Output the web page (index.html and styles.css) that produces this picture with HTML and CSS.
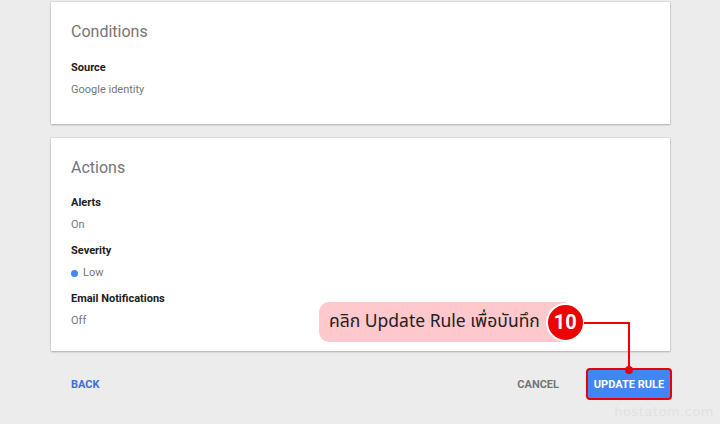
FILE: index.html
```html
<!DOCTYPE html>
<html lang="en">
<head>
    <meta charset="utf-8" />
    <title>Update Rule</title>
	<link rel="stylesheet" href="styles.css">
</head>
<body>
	<div class="page">
		<div class="card card-conditions">
			<div class="card-title">Conditions</div>
			<div class="field">
				<div class="label">Source</div>
				<div class="value">Google identity</div>
			</div>
		</div>

		<div class="card card-actions">
			<div class="card-title">Actions</div>
			<div class="field">
				<div class="label">Alerts</div>
				<div class="value">On</div>
			</div>
			<div class="field">
				<div class="label">Severity</div>
				<div class="value"><span class="dot"></span>Low</div>
			</div>
			<div class="field">
				<div class="label">Email Notifications</div>
				<div class="value">Off</div>
			</div>
		</div>

		<div class="footer">
			<a class="btn-back" href="#">BACK</a>
			<div class="footer-right">
				<a class="btn-cancel" href="#">CANCEL</a>
				<button class="btn-update" type="button">UPDATE RULE</button>
			</div>
		</div>
	</div>

	<div class="callout">
		<div class="callout-text">คลิก Update Rule เพื่อบันทึก</div>
		<div class="callout-num">10</div>
	</div>
	<div class="callout-line-h"></div>
	<div class="callout-line-v"></div>
	<div class="callout-dot"></div>

	<div class="watermark">hostatom.com</div>
</body>
</html>
```

FILE: styles.css
```css
body {
  margin: 0;
  background-color: #ececec;
  font-family: Roboto, "Liberation Sans", sans-serif;
  position: relative;
  width: 720px;
  height: 424px;
  overflow: hidden;
}

.page {
  width: 619px;
  margin: 0 auto;
  padding-top: 2px;
  position: relative;
  left: 0.5px;
}

.card {
  background: #fff;
  box-shadow: 0 1px 2px rgba(0, 0, 0, 0.22), 0 0 0 1px rgba(0, 0, 0, 0.05);
  padding: 20px 20px 22px 20px;
}

.card-conditions {
  height: 80px;
}

.card-conditions .card-title {
  margin-bottom: 18px;
}

.card-actions {
  margin-top: 14px;
}

.card-title {
  font-size: 16px;
  line-height: 20px;
  color: #757575;
  margin-bottom: 17px;
}

.field + .field {
  margin-top: 10px;
}

.label {
  font-size: 11px;
  line-height: 16px;
  font-weight: bold;
  color: #212121;
}

.value {
  font-size: 11px;
  line-height: 16px;
  color: #777;
  margin-top: 6px;
  display: flex;
  align-items: center;
}

.dot {
  width: 7px;
  height: 7px;
  border-radius: 50%;
  background: #4285f4;
  margin-right: 5px;
}

.footer {
  display: flex;
  justify-content: space-between;
  align-items: center;
  margin-top: 17px;
  padding-left: 20px;
}

.footer a {
  text-decoration: none;
  font-size: 11px;
  font-weight: bold;
}

.btn-back {
  color: #3f6cd6;
}

.footer-right {
  display: flex;
  align-items: center;
}

.btn-cancel {
  color: #757575;
  margin-right: 27px;
}

.btn-update {
  font-family: Roboto, "Liberation Sans", sans-serif;
  font-size: 11px;
  font-weight: bold;
  color: #fff;
  background: #4285f4;
  border: 2px solid #e8000b;
  border-radius: 4px;
  width: 86px;
  height: 32px;
  padding: 0;
  margin-right: -2px;
}

/* annotation */
.callout {
  position: absolute;
  left: 319px;
  top: 302px;
  display: flex;
  align-items: center;
}

.callout-text {
  background: #ffc8cc;
  height: 40px;
  line-height: 40px;
  border-radius: 10px 0 0 10px;
  padding: 0 26px 0 10px;
  margin-right: -20px;
  font-family: "Noto Sans Thai", "DejaVu Sans", sans-serif;
  font-size: 17.5px;
  color: #222;
}

.callout-num {
  width: 35px;
  height: 35px;
  border-radius: 50%;
  background: #ee0000;
  border: 2px solid #fff;
  color: #fff;
  font-family: Roboto, "Liberation Sans", sans-serif;
  font-weight: bold;
  font-size: 20px;
  text-align: center;
  line-height: 35px;
  position: relative;
}

.callout-line-h {
  position: absolute;
  left: 584px;
  top: 322px;
  width: 46px;
  height: 2px;
  background: #ee0000;
}

.callout-line-v {
  position: absolute;
  left: 628px;
  top: 322px;
  width: 2px;
  height: 48px;
  background: #ee0000;
}

.callout-dot {
  position: absolute;
  left: 625px;
  top: 366px;
  width: 8px;
  height: 8px;
  border-radius: 50%;
  background: #ee0000;
}

.watermark {
  position: absolute;
  right: 6px;
  top: 404px;
  font-family: "DejaVu Sans", sans-serif;
  font-size: 13px;
  color: #e2e2e2;
  letter-spacing: 0.5px;
}
```
